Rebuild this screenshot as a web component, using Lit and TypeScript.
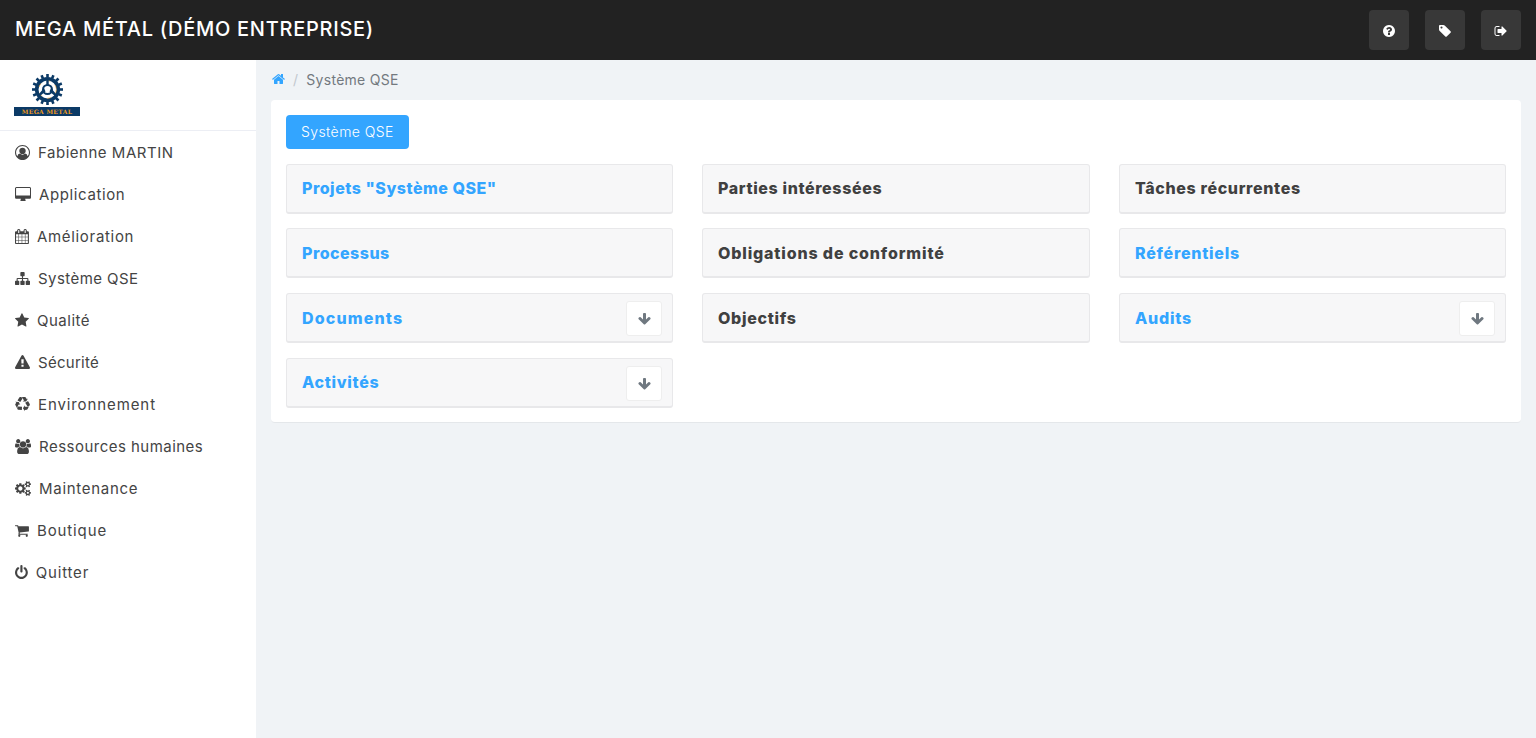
import { LitElement, html, css, svg } from "lit";
import { customElement } from "lit/decorators.js";

type Ic = { w: number; x?: number; d: string };
const I: Record<string, Ic> = {
  home: { w: 1664, d: "M1408 992v480q0 26-19 45t-45 19h-384v-384h-256v384h-384q-26 0-45-19t-19-45v-480q0-1 .5-3t.5-3l575-474 575 474q1 2 1 6zm223-69l-62 74q-8 9-21 11h-3q-13 0-21-7l-692-577-692 577q-12 8-24 7-13-2-21-11l-62-74q-8-10-7-23.500t11-21.500l719-599q32-26 76-26t76 26l244 204v-195q0-14 9-23t23-9h192q14 0 23 9t9 23v408l219 182q10 8 11 21.500t-7 23.500z" },
  star: { w: 1664, x: 64, d: "M1728 647q0 22-26 48l-363 354 86 500q1 7 1 20 0 21-10.500 35.500t-30.500 14.500q-19 0-40-12l-449-236-449 236q-22 12-40 12-21 0-31.500-14.500t-10.500-35.500q0-6 2-20l86-500-364-354q-25-27-25-48 0-37 56-46l502-73 225-455q19-41 49-41t49 41l225 455 502 73q56 9 56 46z" },
  power: { w: 1536, d: "M1536 896q0 156-61 298t-164 245-245 164-298 61-298-61-245-164-164-245-61-298q0-182 80.500-343t226.500-270q43-32 95.500-25t83.500 50q32 42 24.500 94.500t-49.500 84.500q-98 74-151.500 181t-53.500 228q0 104 40.500 198.500t109.500 163.500 163.500 109.500 198.500 40.500 198.500-40.500 163.500-109.500 109.500-163.500 40.500-198.500q0-121-53.500-228t-151.500-181q-42-32-49.500-84.500t24.500-94.500q31-43 84-50t95 25q146 109 226.500 270t80.500 343zm-640-768v640q0 52-38 90t-90 38-90-38-38-90v-640q0-52 38-90t90-38 90 38 38 90z" },
  cart: { w: 1664, d: "M640 1536q0 52-38 90t-90 38-90-38-38-90 38-90 90-38 90 38 38 90zm896 0q0 52-38 90t-90 38-90-38-38-90 38-90 90-38 90 38 38 90zm128-1088v512q0 24-16.500 42.500t-40.500 21.500l-1044 122q13 60 13 70 0 16-24 64h920q26 0 45 19t19 45-19 45-45 19h-1024q-26 0-45-19t-19-45q0-11 8-31.500t16-36 21.500-40 15.500-29.500l-177-823h-204q-26 0-45-19t-19-45 19-45 45-19h256q16 0 28.500 6.500t19.500 15.500 13 24.500 8 26 5.500 29.500 4.500 26h1201q26 0 45 19t19 45z" },
  warning: { w: 1792, d: "M1024 1375v-190q0-14-9.500-23.500t-22.500-9.500h-192q-13 0-22.500 9.500t-9.500 23.500v190q0 14 9.500 23.500t22.500 9.500h192q13 0 22.500-9.500t9.500-23.500zm-2-374l18-459q0-12-10-19-13-11-24-11h-220q-11 0-24 11-10 7-10 21l17 457q0 10 10 16.500t24 6.500h185q14 0 23.500-6.500t10.500-16.500zm-14-934l768 1408q35 63-2 126-17 29-46.500 46t-63.500 17h-1536q-34 0-63.500-17t-46.500-46q-37-63-2-126l768-1408q17-31 47-49t65-18 65 18 47 49z" },
  down: { w: 1664, d: "M1611 832q0 53-37 90l-651 652q-39 37-91 37-53 0-90-37l-651-652q-38-36-38-90 0-53 38-91l74-75q39-37 91-37 53 0 90 37l294 294v-704q0-52 38-90t90-38h128q52 0 90 38t38 90v704l294-294q37-37 90-37 52 0 91 37l75 75q37 39 37 91z" },
  tag: { w: 1792, d: "M576 448q0-53-37.500-90.500t-90.500-37.500-90.500 37.500-37.500 90.500 37.500 90.500 90.500 37.500 90.500-37.500 37.500-90.500zm1067 576q0 53-37 90l-491 492q-39 37-91 37-53 0-90-37l-715-716q-38-37-64.500-101t-26.500-117v-416q0-52 38-90t90-38h416q53 0 117 26.500t102 64.500l715 714q37 39 37 91z" },
  question: { w: 1792, d: "M1024 1376v-192q0-14-9-23t-23-9h-192q-14 0-23 9t-9 23v192q0 14 9 23t23 9h192q14 0 23-9t9-23zm256-672q0-88-55.500-163t-138.500-116-170-41q-243 0-371 213-15 24 8 42l132 100q7 6 19 6 16 0 25-12 53-68 86-92 34-24 86-24 48 0 85.500 26t37.500 59q0 38-20 61t-68 45q-63 28-115.500 86.500t-52.500 125.500v36q0 14 9 23t23 9h192q14 0 23-9t9-23q0-19 21.500-49.500t54.500-49.500q32-18 49-28.500t46-35 44.500-48 28-60.500 12.500-81zm384 192q0 209-103 385.500t-279.500 279.500-385.500 103-385.500-103-279.500-279.500-103-385.500 103-385.500 279.500-279.500 385.500-103 385.500 103 279.500 279.500 103 385.500z" },
  signout: { w: 1792, d: "M704 1440q0 4 1 20t.5 26.500-3 23.500-10 19.500-20.500 6.500h-320q-119 0-203.500-84.500t-84.500-203.500v-704q0-119 84.500-203.500t203.500-84.500h320q13 0 22.500 9.500t9.500 22.500q0 4 1 20t.5 26.500-3 23.500-10 19.500-20.500 6.500h-320q-66 0-113 47t-47 113v704q0 66 47 113t113 47h312l11.500 1 11.500 3 8 5.500 7 9 2 13.500zm928-544q0 26-19 45l-544 544q-19 19-45 19t-45-19-19-45v-288h-448q-26 0-45-19t-19-45v-384q0-26 19-45t45-19h448v-288q0-26 19-45t45-19 45 19l544 544q19 19 19 45z" },
  desktop: { w: 1920, d: "M1792 992v-832q0-13-9.500-22.500t-22.500-9.500h-1600q-13 0-22.500 9.500t-9.500 22.500v832q0 13 9.500 22.500t22.500 9.500h1600q13 0 22.500-9.500t9.500-22.500zm128-832v1088q0 66-47 113t-113 47h-544q0 37 16 77.500t32 71 16 43.500q0 26-19 45t-45 19h-512q-26 0-45-19t-19-45q0-14 16-44t32-70 16-78h-544q-66 0-113-47t-47-113v-1088q0-66 47-113t113-47h1600q66 0 113 47t47 113z" },
  user: { w: 1792, d: "M896 0q182 0 348 71t286 191 191 286 71 348q0 181-70.500 347t-190.500 286-286 191.500-349 71.500-349-71-285.500-191.500-190.500-286-71-347.500 71-348 191-286 286-191 348-71zm619 1351q149-205 149-455 0-156-61-298t-164-245-245-164-298-61-298 61-245 164-164 245-61 298q0 250 149 455 66-327 306-327 131 128 313 128t313-128q240 0 306 327zm-235-647q0-159-112.500-271.500t-271.500-112.500-271.500 112.500-112.500 271.500 112.500 271.500 271.500 112.500 271.500-112.500 112.500-271.500z" },
  calendar: { w: 1664, d: "M128 1664h288v-288h-288v288zm352 0h320v-288h-320v288zm-352-352h288v-320h-288v320zm352 0h320v-320h-320v320zm-352-384h288v-288h-288v288zm736 736h320v-288h-320v288zm-384-736h320v-288h-320v288zm768 736h288v-288h-288v288zm-384-352h320v-320h-320v320zm-352-864v-288q0-13-9.500-22.500t-22.500-9.500h-64q-13 0-22.500 9.500t-9.500 22.500v288q0 13 9.500 22.500t22.500 9.500h64q13 0 22.500-9.500t9.500-22.500zm736 864h288v-320h-288v320zm-384-384h320v-288h-320v288zm384 0h288v-288h-288v288zm32-480v-288q0-13-9.500-22.500t-22.500-9.500h-64q-13 0-22.500 9.500t-9.500 22.500v288q0 13 9.500 22.500t22.500 9.500h64q13 0 22.500-9.500t9.500-22.500zm384-64v1280q0 52-38 90t-90 38h-1408q-52 0-90-38t-38-90v-1280q0-52 38-90t90-38h128v-96q0-66 47-113t113-47h64q66 0 113 47t47 113v96h384v-96q0-66 47-113t113-47h64q66 0 113 47t47 113v96h128q52 0 90 38t38 90z" },
  sitemap: { w: 1792, d: "M1792 1248v320q0 40-28 68t-68 28h-320q-40 0-68-28t-28-68v-320q0-40 28-68t68-28h96v-192h-512v192h96q40 0 68 28t28 68v320q0 40-28 68t-68 28h-320q-40 0-68-28t-28-68v-320q0-40 28-68t68-28h96v-192h-512v192h96q40 0 68 28t28 68v320q0 40-28 68t-68 28h-320q-40 0-68-28t-28-68v-320q0-40 28-68t68-28h96v-192q0-52 38-90t90-38h512v-192h-96q-40 0-68-28t-28-68v-320q0-40 28-68t68-28h320q40 0 68 28t28 68v320q0 40-28 68t-68 28h-96v192h512q52 0 90 38t38 90v192h96q40 0 68 28t28 68z" },
  users: { w: 1920, d: "M593 896q-162 5-265 128h-134q-82 0-138-40.500t-56-118.500q0-353 124-353 6 0 43.500 21t97.500 42.500 119 21.500q67 0 133-23-5 37-5 66 0 139 81 256zm1071 637q0 120-73 189.500t-194 69.500h-874q-121 0-194-69.500t-73-189.500q0-53 3.500-103.500t14-109 26.500-108.500 43-97.500 62-81 85.500-53.500 111.500-20q10 0 43 21.500t73 48 107 48 135 21.500 135-21.500 107-48 73-48 43-21.500q61 0 111.500 20t85.500 53.500 62 81 43 97.500 26.500 108.500 14 109 3.500 103.500zm-1024-1277q0 106-75 181t-181 75-181-75-75-181 75-181 181-75 181 75 75 181zm704 384q0 159-112.500 271.500t-271.500 112.500-271.500-112.500-112.500-271.500 112.500-271.500 271.500-112.500 271.500 112.500 112.500 271.500zm576 225q0 78-56 118.500t-138 40.500h-134q-103-123-265-128 81-117 81-256 0-29-5-66 66 23 133 23 59 0 119-21.500t97.500-42.500 43.500-21q124 0 124 353zm-128-609q0 106-75 181t-181 75-181-75-75-181 75-181 181-75 181 75 75 181z" },
  cogs: { w: 1920, d: "M896 896q0-106-75-181t-181-75-181 75-75 181 75 181 181 75 181-75 75-181zm768 512q0-52-38-90t-90-38-90 38-38 90q0 53 37.500 90.500t90.500 37.500 90.500-37.500 37.500-90.500zm0-1024q0-52-38-90t-90-38-90 38-38 90q0 53 37.500 90.500t90.500 37.500 90.500-37.500 37.500-90.500zm-384 421v185q0 10-7 19.500t-16 10.500l-155 24q-11 35-32 76 34 48 90 115 7 11 7 20 0 12-7 19-23 30-82.500 89.500t-78.500 59.500q-11 0-21-7l-115-90q-37 19-77 31-11 108-23 155-7 24-30 24h-186q-11 0-20-7.500t-10-17.500l-23-153q-34-10-75-31l-118 89q-7 7-20 7-11 0-21-8-144-133-144-160 0-9 7-19 10-14 41-53t47-61q-23-44-35-82l-152-24q-10-1-17-9.500t-7-19.500v-185q0-10 7-19.500t16-10.500l155-24q11-35 32-76-34-48-90-115-7-11-7-20 0-12 7-20 22-30 82-89t79-59q11 0 21 7l115 90q34-18 77-32 11-108 23-154 7-24 30-24h186q11 0 20 7.500t10 17.500l23 153q34 10 75 31l118-89q8-7 20-7 11 0 21 8 144 133 144 160 0 8-7 19-12 16-42 54t-45 60q23 48 34 82l152 23q10 2 17 10.500t7 19.500zm640 533v140q0 16-149 31-12 27-30 52 51 113 51 138 0 4-4 7-122 71-124 71-8 0-46-47t-52-68q-20 2-30 2t-30-2q-14 21-52 68t-46 47q-2 0-124-71-4-3-4-7 0-25 51-138-18-25-30-52-149-15-149-31v-140q0-16 149-31 13-29 30-52-51-113-51-138 0-4 4-7 4-2 35-20t59-34 30-16q8 0 46 46.500t52 67.500q20-2 30-2t30 2q51-71 92-112l6-2q4 0 124 70 4 3 4 7 0 25-51 138 17 23 30 52 149 15 149 31zm0-1024v140q0 16-149 31-12 27-30 52 51 113 51 138 0 4-4 7-122 71-124 71-8 0-46-47t-52-68q-20 2-30 2t-30-2q-14 21-52 68t-46 47q-2 0-124-71-4-3-4-7 0-25 51-138-18-25-30-52-149-15-149-31v-140q0-16 149-31 13-29 30-52-51-113-51-138 0-4 4-7 4-2 35-20t59-34 30-16q8 0 46 46.500t52 67.500q20-2 30-2t30 2q51-71 92-112l6-2q4 0 124 70 4 3 4 7 0 25-51 138 17 23 30 52 149 15 149 31z" },
  recycle: { w: 1792, d: "M836 1169l-15 368-2 22-420-29q-36-3-67-31.500t-47-65.500q-11-27-14.500-55t4-65 12-55 21.500-64 19-53q78 12 509 28zm-387-586l180 379-147-92q-63 72-111.500 144.500t-72.500 125-39.500 94.500-18.500 63l-4 21-190-357q-17-26-18-56t6-47l8-18q35-63 114-188l-140-86zm1231 517l-188 359q-12 29-36.500 46.500t-43.500 20.500l-18 4q-71 7-219 12l8 164-230-367 211-362 7 173q170 16 283 5t170-33zm-785-924q-47 63-265 435l-317-187-19-12 225-356q20-31 60-45t80-10q24 2 48.500 12t42 21 41.500 33 36 34.500 36 39.500 32 35zm655 307l212 363q18 37 12.500 76t-27.500 74q-13 20-33 37t-38 28-48.500 22-47 16-51.500 14-46 12q-34-72-265-436l313-195zm-143-226l142-83-220 373-419-20 151-86q-34-89-75-166t-75.500-123.500-64.500-80-47-46.500l-17-13 405 1q31-3 58 10.500t39 28.500l11 15q39 61 112 190z" },
};

const icon = (name: string, size: number) => {
  const c = I[name];
  const w = (c.w / 1792) * size;
  return html`<svg class="ic" width=${w} height=${size} viewBox="${c.x ?? 0} 0 ${c.w} 1792" fill="currentColor"><path d=${c.d}></path></svg>`;
};

const nav: [string, string, number][] = [
  ["user", "Fabienne MARTIN", 0.52], ["desktop", "Application", 0.61], ["calendar", "Amélioration", 0.69],
  ["sitemap", "Système QSE", 0.43], ["star", "Qualité", 0.52], ["warning", "Sécurité", 0.27],
  ["recycle", "Environnement", 0.9], ["users", "Ressources humaines", 0.47], ["cogs", "Maintenance", 0.7],
  ["cart", "Boutique", 0.89], ["power", "Quitter", 0.8],
];

const panels: { t: string; ls: number; link?: boolean; arrow?: boolean }[] = [
  { t: 'Projets "Système QSE"', ls: 0.5, link: true }, { t: "Parties intéressées", ls: 0.62 }, { t: "Tâches récurrentes", ls: 0.64 },
  { t: "Processus", ls: 0.47, link: true }, { t: "Obligations de conformité", ls: 0.85 }, { t: "Référentiels", ls: 0.75, link: true },
  { t: "Documents", ls: 1.14, link: true, arrow: true }, { t: "Objectifs", ls: 0.7 }, { t: "Audits", ls: 0.75, link: true, arrow: true },
  { t: "Activités", ls: 0.7, link: true, arrow: true },
];

const teeth = Array.from({ length: 16 }, (_, i) => (i * 360) / 16);

@customElement("app-root")
export class AppRoot extends LitElement {
  static styles = css`
    :host { display: block; height: 738px; overflow: hidden; font-family: Inter, "Liberation Sans", sans-serif; background: #f0f3f6; color: #444; }
    .ic { display: block; flex: none; }
    header { height: 60px; background: #222; display: flex; align-items: center; padding: 0 15px; box-sizing: border-box; }
    .brand { flex: 1; color: #fff; font-size: 20px; font-weight: 500; letter-spacing: 0.73px; white-space: nowrap; padding-bottom: 2px; }
    .tools { display: flex; gap: 16px; }
    .tool { width: 40px; height: 40px; box-sizing: border-box; padding-top: 2px; background: #383838; border-radius: 4px; display: flex; align-items: center; justify-content: center; color: #fff; }
    .body { display: flex; height: 678px; }
    aside { width: 256px; flex: none; background: #fff; }
    .logo { height: 71px; box-sizing: border-box; border-bottom: 1px solid #eceef4; padding: 14px 0 0 14px; }
    .logo svg { display: block; }
    .banner { width: 66px; height: 9px; background: #0b3a66; color: #f09a1c; font: bold 6px/9px "DejaVu Serif", serif; letter-spacing: 0.3px; text-align: center; white-space: nowrap; }
    .item { height: 42px; display: flex; align-items: center; padding-left: 15px; font-size: 15px; color: #444; }
    .item .ic { margin-right: 8px; }
    main { flex: 1; padding: 0 15px; min-width: 0; }
    .crumb { height: 40px; box-sizing: border-box; padding: 0 0 2px 1px; display: flex; align-items: center; font-size: 14px; color: #73797f; letter-spacing: 0.28px; }
    .crumb .ic { color: #33a5ff; }
    .sep { color: #c2c8ce; margin: 0 8px; }
    .card { background: #fff; border-radius: 4px; border-bottom: 1px solid #e4e7ea; padding: 15px 15px 14.150px; }
    .btn { display: inline-flex; align-items: center; box-sizing: border-box; height: 34px; padding: 0 15px 1px 15px; background: #33a5ff; color: #fff; border-radius: 4px; font-size: 14px; font-weight: 300; letter-spacing: 0.42px; vertical-align: top; }
    .grid { display: grid; grid-template-columns: 387px 388px 387px; column-gap: 29px; row-gap: 14.750px; margin-top: 14.600px; }
    .panel { height: 50px; box-sizing: border-box; background: #f7f7f8; border: 1px solid #e8e8ea; border-bottom-width: 2px; border-radius: 3px; display: flex; align-items: center; justify-content: space-between; padding: 0 10px 0 15px; }
    .title { font-size: 16px; font-weight: 800; color: #404040; }
    .title.link { color: #33a5ff; }
    .arrow { width: 36px; height: 35px; box-sizing: border-box; margin-top: 2px; padding-top: 1px; background: #fff; border: 1px solid #eeeeee; border-radius: 3px; display: flex; align-items: center; justify-content: center; color: #6f7880; }
  `;

  render() {
    return html`
      <header>
        <div class="brand">MEGA MÉTAL (DÉMO ENTREPRISE)</div>
        <div class="tools">
          <div class="tool">${icon("question", 14)}</div>
          <div class="tool">${icon("tag", 14)}</div>
          <div class="tool">${icon("signout", 14)}</div>
        </div>
      </header>
      <div class="body">
        <aside>
          <div class="logo">
            <svg width="66" height="33" viewBox="0 0 66 33">
              <g transform="translate(33.500 15.500)">
                ${teeth.map((a) => svg`<rect x="-1.300" y="-15.500" width="2.600" height="3.500" fill="#0b3a66" transform="rotate(${a})"></rect>`)}
                <circle r="10.800" fill="none" stroke="#0b3a66" stroke-width="3.600"></circle>
                <circle r="8.800" fill="none" stroke="#f09a1c" stroke-width="0.6" stroke-dasharray="4 6"></circle>
                <circle r="4.500" fill="none" stroke="#0b3a66" stroke-width="2"></circle>
                <path d="M-1.200-10V-4.500H1.200V-10ZM-3.500-1.500L-9 5-7.500 6.500-2 2ZM3.500-1.500L9 5 7.500 6.500 2 2Z" fill="#0b3a66"></path>
              </g>
            </svg>
            <div class="banner">MEGA METAL</div>
          </div>
          ${nav.map(([i, t, ls]) => html`<div class="item">${icon(i, 15)}<span style="letter-spacing:${ls}px">${t}</span></div>`)}
        </aside>
        <main>
          <div class="crumb">${icon("home", 14)}<span class="sep">/</span><span>Système QSE</span></div>
          <div class="card">
            <div class="btn">Système QSE</div>
            <div class="grid">
              ${panels.map((p) => html`<div class="panel">
                <span class="title ${p.link ? "link" : ""}" style="letter-spacing:${p.ls}px">${p.t}</span>
                ${p.arrow ? html`<div class="arrow">${icon("down", 14)}</div>` : ""}
              </div>`)}
            </div>
          </div>
        </main>
      </div>
    `;
  }
}
